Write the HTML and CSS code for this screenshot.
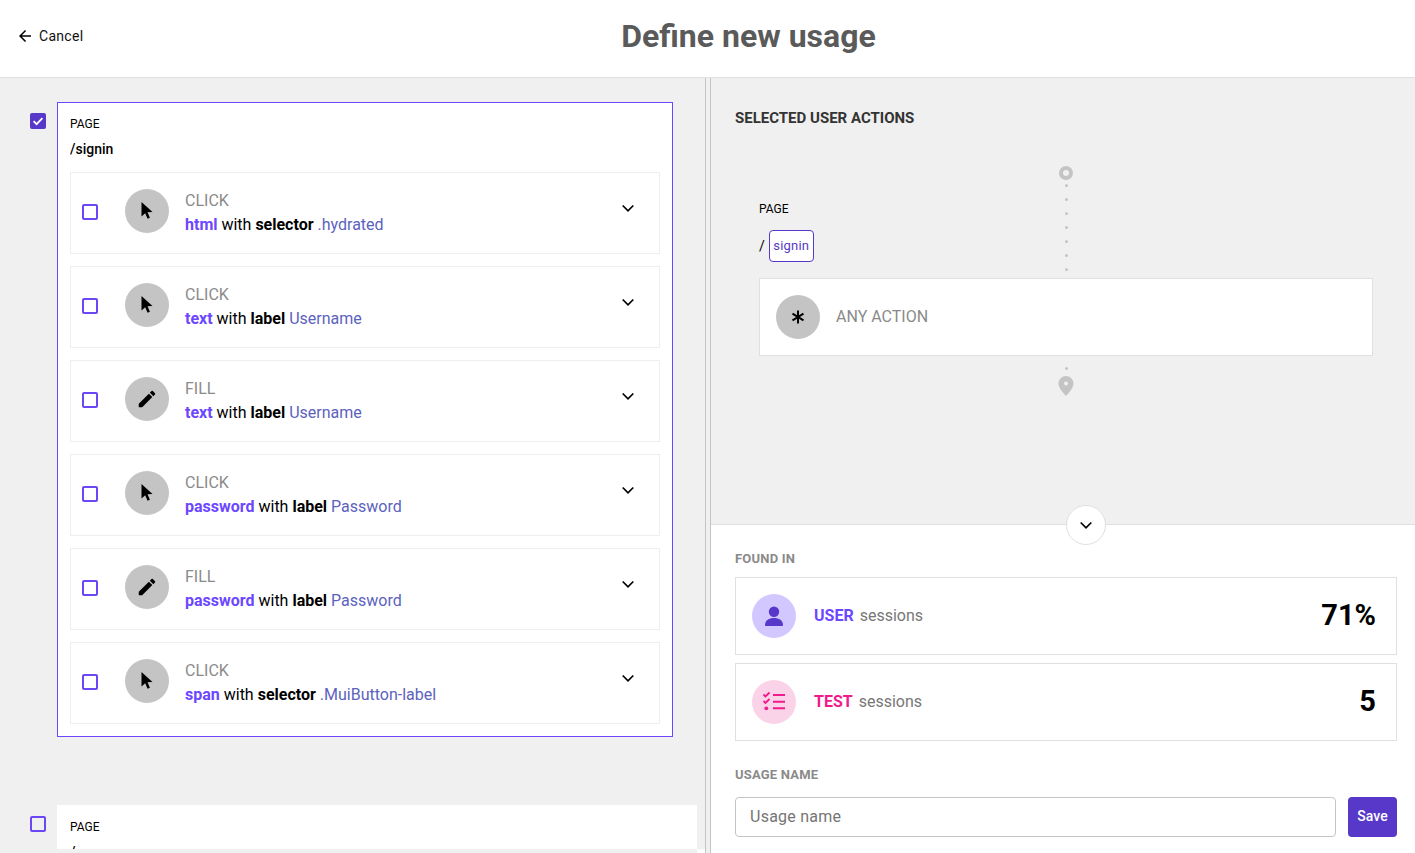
FILE: index.html
```html
<!DOCTYPE html>
<html lang="en">
<head>
<meta charset="utf-8">
<title>Define new usage</title>
<link rel="stylesheet" href="styles.css">
</head>
<body>
<svg class="defs" width="0" height="0" aria-hidden="true">
  <defs>
    <symbol id="i-cursor" viewBox="0 0 24 24"><path d="M6.500 3v14.600l3.700-3.400 2.400 5.600 2.300-1-2.400-5.500 5-.4z"/></symbol>
    <symbol id="i-edit" viewBox="0 0 24 24"><path d="M3 17.250V21h3.750L17.810 9.940l-3.750-3.750L3 17.250zM20.710 7.040c.39-.39.39-1.020 0-1.410l-2.340-2.340c-.39-.39-1.020-.39-1.410 0l-1.830 1.830 3.750 3.750 1.830-1.830z"/></symbol>
    <symbol id="i-chev" viewBox="0 0 24 24"><path d="M6.700 9.500l5.300 5.300 5.300-5.300" fill="none" stroke="#000" stroke-width="1.700"/></symbol>
  </defs>
</svg>
<header class="topbar">
  <button class="cancel" type="button">
    <svg class="cancel-icon" viewBox="0 0 24 24"><path d="M20 11H7.830l5.590-5.590L12 4l-8 8 8 8 1.410-1.410L7.830 13H20v-2z"/></svg>
    <span>Cancel</span>
  </button>
  <h1 class="title">Define new usage</h1>
</header>
<main class="split">
  <section class="left">
    <div class="page-row">
      <span class="cb cb-on"><svg viewBox="0 0 16 16"><path d="M3.600 8.200l3 3 5.800-6" fill="none" stroke="#fff" stroke-width="1.800"/></svg></span>
      <div class="page-card selected">
        <div class="page-label">PAGE</div>
        <div class="page-path">/signin</div>
        <div class="actions">
          <div class="action">
            <span class="cb"></span>
            <span class="circle"><svg class="ic"><use href="#i-cursor"/></svg></span>
            <div class="action-text">
              <div class="verb">CLICK</div>
              <div class="desc"><b class="el">html</b> with <b>selector</b> <span class="val">.hydrated</span></div>
            </div>
            <svg class="chev"><use href="#i-chev"/></svg>
          </div>
          <div class="action">
            <span class="cb"></span>
            <span class="circle"><svg class="ic"><use href="#i-cursor"/></svg></span>
            <div class="action-text">
              <div class="verb">CLICK</div>
              <div class="desc"><b class="el">text</b> with <b>label</b> <span class="val">Username</span></div>
            </div>
            <svg class="chev"><use href="#i-chev"/></svg>
          </div>
          <div class="action">
            <span class="cb"></span>
            <span class="circle"><svg class="ic-edit"><use href="#i-edit"/></svg></span>
            <div class="action-text">
              <div class="verb">FILL</div>
              <div class="desc"><b class="el">text</b> with <b>label</b> <span class="val">Username</span></div>
            </div>
            <svg class="chev"><use href="#i-chev"/></svg>
          </div>
          <div class="action">
            <span class="cb"></span>
            <span class="circle"><svg class="ic"><use href="#i-cursor"/></svg></span>
            <div class="action-text">
              <div class="verb">CLICK</div>
              <div class="desc"><b class="el">password</b> with <b>label</b> <span class="val">Password</span></div>
            </div>
            <svg class="chev"><use href="#i-chev"/></svg>
          </div>
          <div class="action">
            <span class="cb"></span>
            <span class="circle"><svg class="ic-edit"><use href="#i-edit"/></svg></span>
            <div class="action-text">
              <div class="verb">FILL</div>
              <div class="desc"><b class="el">password</b> with <b>label</b> <span class="val">Password</span></div>
            </div>
            <svg class="chev"><use href="#i-chev"/></svg>
          </div>
          <div class="action">
            <span class="cb"></span>
            <span class="circle"><svg class="ic"><use href="#i-cursor"/></svg></span>
            <div class="action-text">
              <div class="verb">CLICK</div>
              <div class="desc"><b class="el">span</b> with <b>selector</b> <span class="val">.MuiButton-label</span></div>
            </div>
            <svg class="chev"><use href="#i-chev"/></svg>
          </div>
        </div>
      </div>
    </div>
    <div class="page-row next">
      <span class="cb"></span>
      <div class="page-card wide">
        <div class="page-label">PAGE</div>
        <div class="page-path">/</div>
      </div>
    </div>
  </section>
  <div class="divider"></div>
  <section class="right">
    <div class="selected-panel">
      <h2 class="panel-title">SELECTED USER ACTIONS</h2>
      <div class="flow">
        <div class="flow-start">
          <span class="ring"></span>
          <span class="dots"><i></i><i></i><i></i><i></i><i></i><i></i><i></i></span>
        </div>
        <div class="flow-page">
          <div class="page-label">PAGE</div>
          <div class="crumb"><span>/</span><span class="chip">signin</span></div>
        </div>
        <div class="any-card">
          <span class="circle"><svg class="ic-star" viewBox="0 0 14 14"><path d="M7 .5v13M1.500 3.700l11 6.600M12.500 3.700l-11 6.600" fill="none" stroke="#000" stroke-width="2"/></svg></span>
          <span class="any-label">ANY ACTION</span>
        </div>
        <div class="flow-end">
          <i class="dot"></i>
          <svg class="pin" viewBox="0 0 16 20"><path fill-rule="evenodd" d="M8 0a7.500 7.500 0 0 1 7.500 7.500C15.500 12 11 16.500 8 20 5 16.500.5 12 .5 7.500A7.500 7.500 0 0 1 8 0zm0 5.500a2 2 0 1 0 0 4 2 2 0 0 0 0-4z"/></svg>
        </div>
      </div>
    </div>
    <div class="found-panel">
      <button class="collapse" type="button"><svg class="chev"><use href="#i-chev"/></svg></button>
      <h3 class="sub-title">FOUND IN</h3>
      <div class="stat">
        <span class="circle user-c"><svg class="ic" viewBox="0 0 24 24"><circle cx="12" cy="7.700" r="5.200"/><path d="M3 21c0-4.500 4-7 9-7s9 2.500 9 7c0 .6-.4 1-1 1H4c-.6 0-1-.4-1-1z"/></svg></span>
        <span class="stat-name user-t">USER</span>
        <span class="stat-sub">sessions</span>
        <span class="stat-val">71%</span>
      </div>
      <div class="stat">
        <span class="circle test-c"><svg class="ic" viewBox="0 0 24 24"><path d="M11 5h12M11 11.700h12M11 18.300h12" fill="none" stroke="#f01a8c" stroke-width="2"/><path d="M1.500 4.500l2 2 4-4M1.500 11l2 2 4-4" fill="none" stroke="#f01a8c" stroke-width="1.800"/><circle cx="4.300" cy="18.300" r="1.900"/></svg></span>
        <span class="stat-name test-t">TEST</span>
        <span class="stat-sub">sessions</span>
        <span class="stat-val">5</span>
      </div>
      <h3 class="sub-title name-title">USAGE NAME</h3>
      <form class="name-row">
        <input class="name-input" type="text" placeholder="Usage name">
        <button class="save" type="button">Save</button>
      </form>
    </div>
  </section>
</main>
</body>
</html>
```

FILE: styles.css
```css
* { box-sizing: border-box; }
html, body { height: 100%; }
body {
  margin: 0;
  height: 853px;
  overflow: hidden;
  display: flex;
  flex-direction: column;
  font-family: Roboto, "Liberation Sans", sans-serif;
  background: #fff;
  color: #000;
}
.defs { position: absolute; }

.topbar {
  height: 78px;
  flex: none;
  display: flex;
  align-items: center;
  padding-bottom: 5px;
  background: #fff;
  border-bottom: 1px solid #e0e0e0;
}
.cancel {
  width: 82px;
  padding: 0 0 0 16px;
  flex: none;
  display: flex;
  align-items: center;
  gap: 5px;
  border: 0;
  background: none;
  font: 400 14px/20px Roboto, sans-serif;
  letter-spacing: .3px;
  color: #111;
  white-space: nowrap;
}
.cancel-icon { width: 18px; height: 18px; flex: none; }
.title {
  flex: 1;
  margin: 0;
  text-align: center;
  font-size: 32px;
  line-height: 40px;
  font-weight: 700;
  color: #5a5a5a;
}

.split { flex: 1; min-height: 0; display: flex; }

.left {
  width: 705px;
  flex: none;
  overflow: hidden;
  position: relative;
  background: #f0f0f0;
  padding: 24px 0 0 30px;
}
.left::after {
  content: "";
  position: absolute;
  right: 0;
  bottom: 0;
  width: 8px;
  height: 4px;
  background: #fff;
}
.page-row { display: flex; align-items: flex-start; gap: 11px; }
.page-row.next { margin-top: 68px; height: 44px; overflow: hidden; }
.page-row > .cb { margin-top: 11px; }

.cb {
  width: 16px;
  height: 16px;
  flex: none;
  display: block;
  border: 2px solid #6c47f5;
  border-radius: 2px;
  background: #fff;
}
.next .cb { background: transparent; }
.cb-on { background: #5738c8; border-color: #5738c8; position: relative; }
.cb-on svg { position: absolute; left: -2px; top: -2px; width: 16px; height: 16px; }

.page-card {
  width: 616px;
  flex: none;
  background: #fff;
  padding: 12px;
}
.page-card.selected { border: 1px solid #6c47ff; }
.page-card.wide { width: 640px; padding: 13px 13px 0; }
.page-label { font-size: 12px; line-height: 18px; color: #000; }
.page-path { margin-top: 7px; font-size: 14px; line-height: 18px; font-weight: 500; }

.actions { margin-top: 14px; display: flex; flex-direction: column; gap: 12px; }
.action {
  height: 82px;
  display: flex;
  align-items: flex-start;
  padding-left: 11px;
  border: 1px solid #eeeeee;
}
.action > .cb { margin-top: 31px; }
.circle {
  width: 44px;
  height: 44px;
  flex: none;
  border-radius: 50%;
  background: #c4c4c4;
  display: flex;
  align-items: center;
  justify-content: center;
}
.action > .circle { margin: 16px 0 0 27px; }
.ic { width: 24px; height: 24px; fill: #000; }
.ic-edit { width: 22px; height: 22px; fill: #000; }
.action-text { flex: 1; margin: 16px 0 0 16px; }
.verb { font-size: 16px; line-height: 24px; color: #8a8a8a; }
.desc { font-size: 16px; line-height: 24px; color: #000; white-space: nowrap; }
.desc b { font-weight: 700; }
.desc b.el { color: #6c47ff; }
.val { color: #5c62bd; }
.chev { width: 24px; height: 24px; flex: none; }
.action > .chev { margin: 23px 19px 0 0; }

.divider {
  width: 6px;
  flex: none;
  background: #f0f0f0;
  border-left: 1px solid #c4c4c4;
  border-right: 1px solid #c4c4c4;
}

.right { flex: 1; min-width: 0; display: flex; flex-direction: column; }
.selected-panel {
  height: 447px;
  flex: none;
  background: #f0f0f0;
  border-bottom: 1px solid #e0e0e0;
  padding: 30px 24px 0;
}
.panel-title {
  margin: 0;
  font-size: 15px;
  line-height: 20px;
  font-weight: 700;
  color: #333;
}
.flow { margin-top: 38px; padding: 0 18px 0 24px; position: relative; }
.flow-start {
  position: absolute;
  left: 0;
  right: 0;
  top: 0;
  margin-left: 24px;
  width: 614px;
  display: flex;
  flex-direction: column;
  align-items: center;
}
.ring {
  width: 14px;
  height: 14px;
  border-radius: 50%;
  border: 4px solid #c4c4c4;
  background: #f0f0f0;
}
.dots { display: flex; flex-direction: column; gap: 11px; margin-top: 4px; }
.dots i, .dot { display: block; width: 3px; height: 3px; border-radius: 50%; background: #c4c4c4; }
.flow-page { padding-top: 34px; height: 112px; position: relative; }
.crumb { margin-top: 12px; display: flex; align-items: center; gap: 4px; font-size: 14px; line-height: 20px; }
.chip {
  width: 45px;
  height: 32px;
  display: flex;
  align-items: center;
  justify-content: center;
  border: 1px solid #5738c8;
  border-radius: 4px;
  background: #fff;
  color: #5738c8;
  font-size: 13px;
  letter-spacing: .2px;
}
.any-card {
  width: 614px;
  height: 78px;
  display: flex;
  align-items: center;
  gap: 16px;
  padding-left: 16px;
  background: #fff;
  border: 1px solid #e0e0e0;
}
.ic-star { width: 14px; height: 14px; }
.any-label { font-size: 16px; color: #8a8a8a; margin-bottom: 2px; }
.flow-end {
  width: 614px;
  display: flex;
  flex-direction: column;
  align-items: center;
  padding-top: 11px;
}
.pin { width: 16px; height: 20px; fill: #c4c4c4; margin-top: 6px; }

.found-panel {
  flex: 1;
  min-height: 0;
  position: relative;
  background: #fff;
  padding: 26px 18px 0 24px;
}
.collapse {
  position: absolute;
  left: 355px;
  top: -20px;
  width: 40px;
  height: 40px;
  padding: 0;
  border-radius: 50%;
  border: 1px solid #e0e0e0;
  background: #fff;
  display: flex;
  align-items: center;
  justify-content: center;
}
.sub-title {
  margin: 0;
  font-size: 13px;
  line-height: 16px;
  font-weight: 700;
  letter-spacing: .2px;
  color: #8a8a8a;
}
.stat {
  height: 78px;
  margin-top: 8px;
  display: flex;
  align-items: center;
  padding: 0 20px 0 16px;
  border: 1px solid #e0e0e0;
  background: #fff;
}
.sub-title + .stat { margin-top: 10px; }
.user-c { background: #d3c7ff; }
.user-c .ic { fill: #5738c8; }
.test-c { background: #fbd3e9; }
.test-c .ic { fill: #f01a8c; }
.stat-name { margin: 0 0 2px 18px; font-size: 16px; font-weight: 700; }
.user-t { color: #6c47ff; }
.test-t { color: #f01a8c; }
.stat-sub { margin: 0 0 2px 6px; font-size: 16px; color: #777; }
.stat-val { margin: 0 0 3px auto; font-size: 29px; font-weight: 700; color: #000; }
.name-title { margin-top: 26px; }
.name-row { margin-top: 14px; display: flex; gap: 12px; }
.name-input {
  flex: 1;
  min-width: 0;
  height: 40px;
  padding: 0 14px 2px;
  border: 1px solid #c4c4c4;
  border-radius: 4px;
  font: 400 16px Roboto, sans-serif;
  letter-spacing: .25px;
  outline: none;
}
.name-input::placeholder { color: #757575; opacity: 1; }
.save {
  width: 49px;
  height: 40px;
  padding: 0 0 2px;
  border: 0;
  border-radius: 4px;
  background: #5738c8;
  color: #fff;
  font: 500 14px Roboto, sans-serif;
}
```
